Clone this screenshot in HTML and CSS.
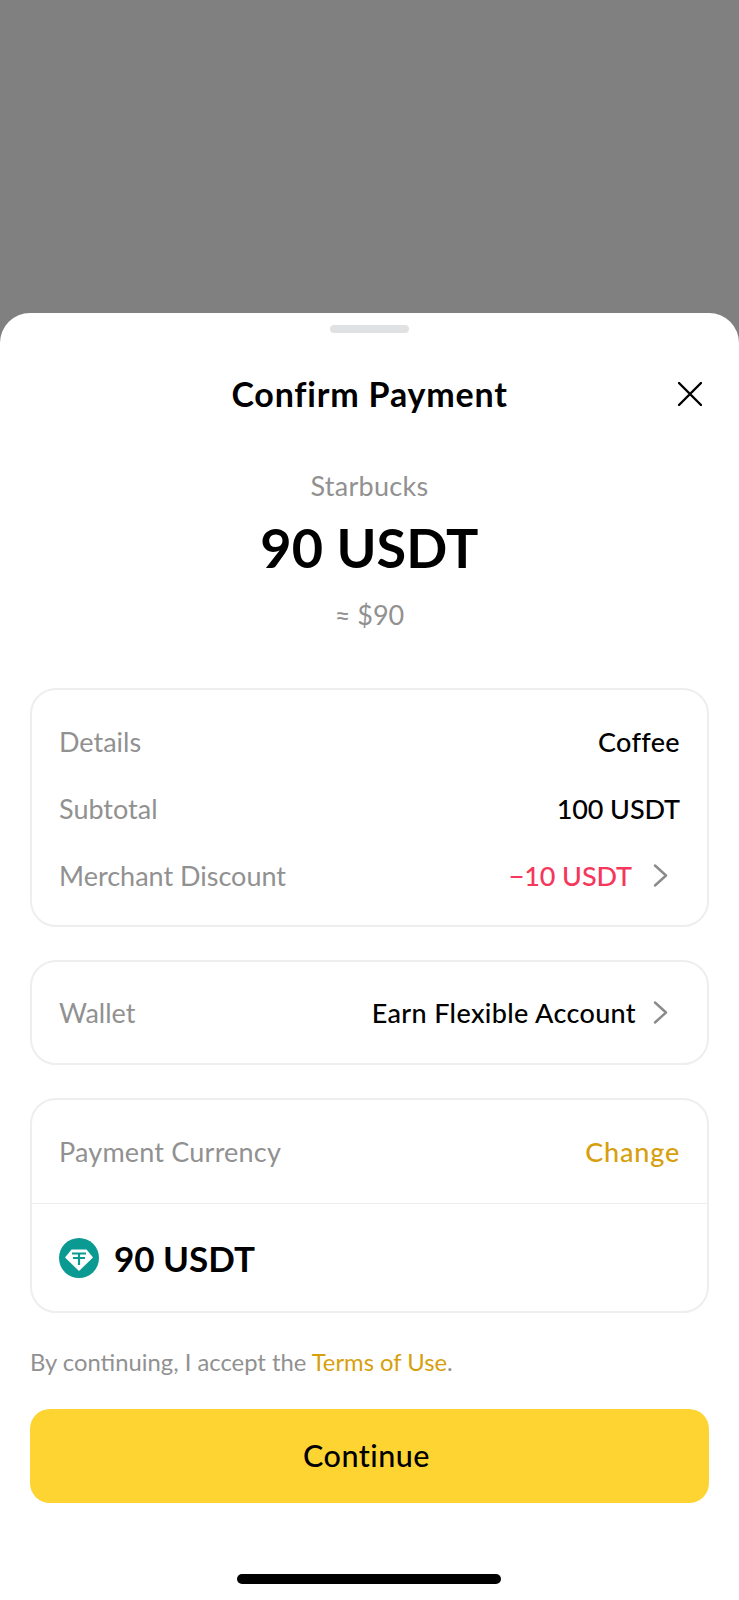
FILE: index.html
```html
<!DOCTYPE html>
<html>
    <head>
        <title>Confirm Payment</title>
        <meta charset="utf-8">
        <link rel="stylesheet" href="styles.css">
    </head>
    <body>
        <div class="sheet">
            <div class="handle"></div>

            <div class="sheet_header">
                <h1 class="title">Confirm Payment</h1>
                <svg class="close" width="24" height="24" viewBox="0 0 24 24">
                    <path d="M1 1L23 23M23 1L1 23" fill="none" stroke="#000" stroke-width="2.4" stroke-linecap="round"/>
                </svg>
            </div>

            <div class="summary">
                <p class="merchant">Starbucks</p>
                <p class="amount">90 USDT</p>
                <p class="approx">≈ $90</p>
            </div>

            <div class="card card_details">
                <div class="row">
                    <span class="label">Details</span>
                    <span class="value">Coffee</span>
                </div>
                <div class="row">
                    <span class="label">Subtotal</span>
                    <span class="value number">100 USDT</span>
                </div>
                <div class="row">
                    <span class="label">Merchant Discount</span>
                    <span class="value_group">
                        <span class="value number red">−10 USDT</span>
                        <svg class="chevron" width="15" height="23" viewBox="0 0 15 23">
                            <path d="M2 1.5L13 11.5L2 21.5" fill="none" stroke="#8a8a8a" stroke-width="2.4" stroke-linecap="round" stroke-linejoin="round"/>
                        </svg>
                    </span>
                </div>
            </div>

            <div class="card card_wallet">
                <div class="row">
                    <span class="label">Wallet</span>
                    <span class="value_group">
                        <span class="value">Earn Flexible Account</span>
                        <svg class="chevron" width="15" height="23" viewBox="0 0 15 23">
                            <path d="M2 1.5L13 11.5L2 21.5" fill="none" stroke="#8a8a8a" stroke-width="2.4" stroke-linecap="round" stroke-linejoin="round"/>
                        </svg>
                    </span>
                </div>
            </div>

            <div class="card card_currency">
                <div class="currency_head">
                    <span class="label label_wide">Payment Currency</span>
                    <span class="value gold change">Change</span>
                </div>
                <div class="currency_body">
                    <svg class="coin" width="40" height="40" viewBox="0 0 40 40">
                        <circle cx="20" cy="20" r="20" fill="#0b9a91"/>
                        <path d="M12.5 11.5H27.5L34 19.5L20 33L6 19.5Z" fill="#fff"/>
                        <path d="M13 15.5H27M20 15.5V27M14 20H26" fill="none" stroke="#0b9a91" stroke-width="2.2"/>
                    </svg>
                    <span class="coin_amount">90 USDT</span>
                </div>
            </div>

            <p class="terms">By continuing, I accept the <span class="gold">Terms of Use</span>.</p>

            <button class="continue">Continue</button>

            <div class="home_bar"></div>
        </div>
    </body>
</html>
```

FILE: styles.css
```css
* {
    box-sizing: border-box;
}

html, body {
    margin: 0;
    height: 1600px;
}

body {
    font-family: "Lato", "Liberation Sans", sans-serif;
    background-color: #808080;
    color: #000;
    padding-top: 313px;
    overflow: hidden;
}

.sheet {
    height: 1287px;
    background: #fff;
    border-radius: 30px 30px 0 0;
    padding: 12px 30px 0;
    display: flex;
    flex-direction: column;
}

.handle {
    width: 79px;
    height: 8px;
    border-radius: 4px;
    background: #dfe1e3;
    align-self: center;
}

.sheet_header {
    position: relative;
    height: 48px;
    margin-top: 37px;
    display: flex;
    align-items: center;
    justify-content: center;
}

.title {
    margin: 0;
    font-size: 34px;
    font-weight: 700;
    line-height: 48px;
    letter-spacing: .8px;
}

.close {
    position: absolute;
    right: 7px;
    top: 12px;
}

.summary {
    margin-top: 48px;
    text-align: center;
}

.summary p {
    margin: 0;
}

.merchant {
    font-size: 27px;
    line-height: 40px;
    letter-spacing: .3px;
    color: #919191;
}

.summary .amount {
    margin-top: 9px;
    font-size: 54px;
    font-weight: 700;
    line-height: 66px;
    letter-spacing: .1px;
}

.summary .approx {
    margin-top: 16px;
    font-size: 27px;
    line-height: 36px;
    color: #919191;
}

.card {
    border: 2px solid #eceef0;
    border-radius: 26px;
}

.card_details {
    height: 239px;
    margin-top: 55px;
    padding: 18px 27px 0;
}

.card_wallet {
    height: 105px;
    margin-top: 33px;
    padding: 0 27px;
    display: flex;
    align-items: center;
}

.card_currency {
    height: 215px;
    margin-top: 33px;
}

.row {
    height: 67px;
    width: 100%;
    display: flex;
    align-items: center;
    justify-content: space-between;
}

.label {
    font-size: 27px;
    color: #919191;
}

.label_wide {
    letter-spacing: .2px;
}

.value {
    font-size: 27px;
    font-weight: 500;
    letter-spacing: .35px;
}

.number {
    letter-spacing: -.1px;
}

.value_group {
    display: flex;
    align-items: center;
    gap: 17px;
}

.chevron {
    margin-right: 12px;
}

.red {
    color: #f6365a;
    margin-right: 4px;
}

.gold {
    color: #d79f0d;
}

.change {
    letter-spacing: .8px;
}

.currency_head {
    height: 104px;
    padding: 0 27px;
    display: flex;
    align-items: center;
    justify-content: space-between;
    border-bottom: 1px solid #eceef0;
}

.currency_body {
    height: 107px;
    padding: 1px 27px 0;
    display: flex;
    align-items: center;
    gap: 15px;
}

.coin_amount {
    font-size: 35px;
    font-weight: 700;
}

.terms {
    margin: 33px 0 0;
    font-size: 23.8px;
    line-height: 32px;
    color: #919191;
}

.continue {
    height: 94px;
    margin-top: 31px;
    border: 0;
    border-radius: 20px;
    background: #fdd432;
    font-family: inherit;
    font-size: 30.5px;
    font-weight: 500;
    letter-spacing: .5px;
    color: #000;
    padding: 0 6px 3px 0;
}

.home_bar {
    width: 264px;
    height: 10px;
    margin: 71px 1px 0 0;
    border-radius: 5px;
    background: #000;
    align-self: center;
}
```
